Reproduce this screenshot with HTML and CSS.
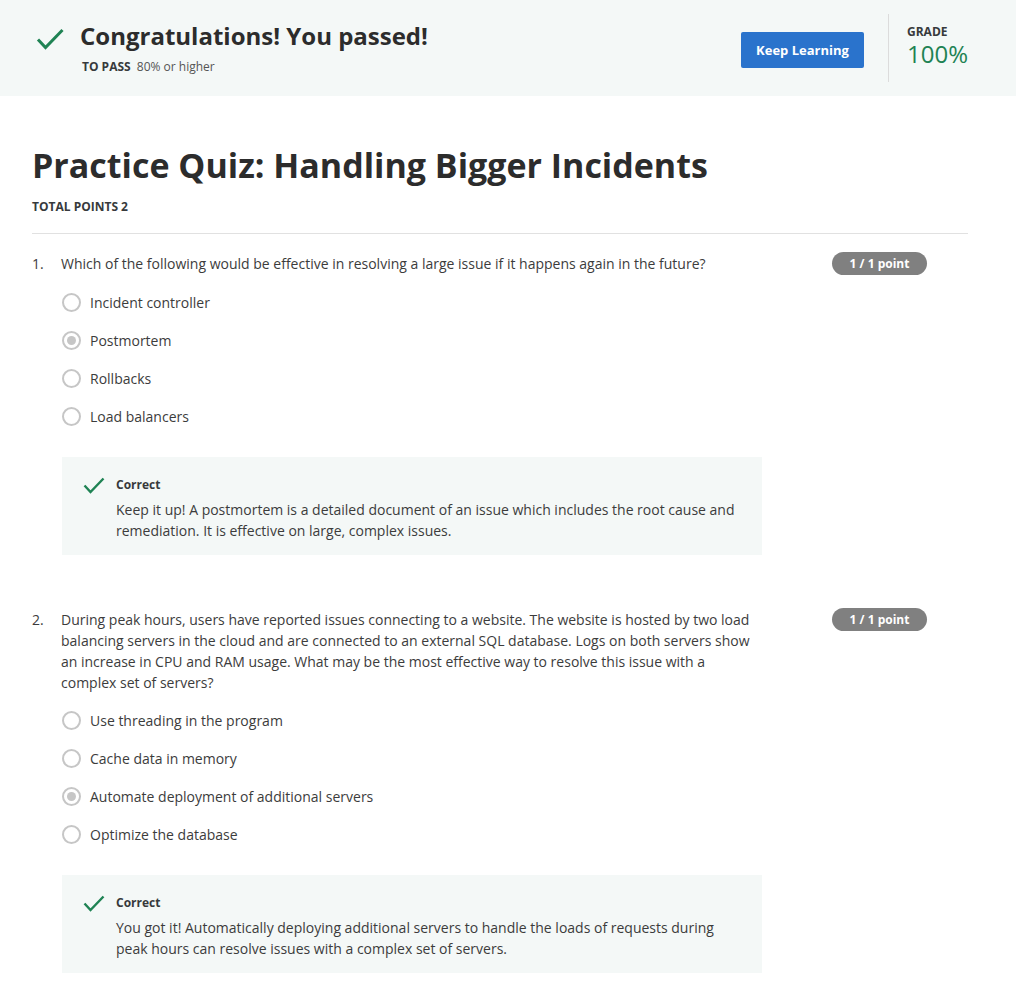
FILE: index.html
```html
<!DOCTYPE html>
<html lang="en">
<head>
<meta charset="utf-8">
<title>Practice Quiz: Handling Bigger Incidents</title>
<link rel="stylesheet" href="styles.css">
</head>
<body>
<header class="banner">
  <div class="banner-inner">
    <svg class="banner-check" width="28" height="22" viewBox="0 0 28 22"><path d="M2 11.5 L9.5 19.5 L26.5 2" fill="none" stroke="#1f8354" stroke-width="3"/></svg>
    <div class="banner-text">
      <h2 class="banner-title">Congratulations! You passed!</h2>
      <div class="banner-sub"><span class="label">TO PASS</span> 80% or higher</div>
    </div>
    <button class="btn-primary">Keep Learning</button>
    <div class="grade">
      <div class="label">GRADE</div>
      <div class="grade-value">100%</div>
    </div>
  </div>
</header>

<main class="content">
  <h1 class="quiz-title">Practice Quiz: Handling Bigger Incidents</h1>
  <div class="total label">TOTAL POINTS 2</div>
  <hr class="rule">

  <section class="question">
    <div class="q-row">
      <span class="q-num">1.</span>
      <p class="q-text">Which of the following would be effective in resolving a large issue if it happens again in the future?</p>
      <span class="badge">1 / 1 point</span>
    </div>
    <ul class="options">
      <li class="option"><span class="radio"></span>Incident controller</li>
      <li class="option"><span class="radio checked"></span>Postmortem</li>
      <li class="option"><span class="radio"></span>Rollbacks</li>
      <li class="option"><span class="radio"></span>Load balancers</li>
    </ul>
    <div class="feedback">
      <svg class="fb-check" width="22" height="17" viewBox="0 0 22 17"><path d="M1.5 8.5 L7.5 15 L20.5 1.5" fill="none" stroke="#1f8354" stroke-width="2.4"/></svg>
      <div class="fb-title">Correct</div>
      <p class="fb-text">Keep it up! A postmortem is a detailed document of an issue which includes the root cause and remediation. It is effective on large, complex issues.</p>
    </div>
  </section>

  <section class="question q2">
    <div class="q-row">
      <span class="q-num">2.</span>
      <p class="q-text">During peak hours, users have reported issues connecting to a website. The website is hosted by two load balancing servers in the cloud and are connected to an external SQL database. Logs on both servers show an increase in CPU and RAM usage. What may be the most effective way to resolve this issue with a complex set of servers?</p>
      <span class="badge">1 / 1 point</span>
    </div>
    <ul class="options">
      <li class="option"><span class="radio"></span>Use threading in the program</li>
      <li class="option"><span class="radio"></span>Cache data in memory</li>
      <li class="option"><span class="radio checked"></span>Automate deployment of additional servers</li>
      <li class="option"><span class="radio"></span>Optimize the database</li>
    </ul>
    <div class="feedback">
      <svg class="fb-check" width="22" height="17" viewBox="0 0 22 17"><path d="M1.5 8.5 L7.5 15 L20.5 1.5" fill="none" stroke="#1f8354" stroke-width="2.4"/></svg>
      <div class="fb-title">Correct</div>
      <p class="fb-text">You got it! Automatically deploying additional servers to handle the loads of requests during peak hours can resolve issues with a complex set of servers.</p>
    </div>
  </section>
</main>
</body>
</html>
```

FILE: styles.css
```css
* { box-sizing: border-box; }
html, body { margin: 0; padding: 0; background: #fff; }
body {
  font-family: "Open Sans", "Liberation Sans", sans-serif;
  color: #3c3c3c;
  font-size: 14px;
  line-height: 21px;
}
.label {
  font-size: 12px;
  font-weight: 700;
  color: #373a3c;
}

/* banner */
.banner {
  background: #f4f8f7;
  height: 96px;
}
.banner-inner {
  display: flex;
  align-items: flex-start;
  width: 968px;
  padding-left: 36px;
  height: 96px;
}
.banner-check {
  margin-top: 28px;
  flex: none;
}
.banner-text {
  margin-left: 16px;
  margin-top: 20px;
  flex: 1;
}
.banner-title {
  margin: 0;
  font-size: 24px;
  line-height: 32px;
  font-weight: 700;
  color: #2c2c2c;
}
.banner-sub {
  margin-top: 7px;
  margin-left: 2px;
  font-size: 12px;
  line-height: 16px;
  color: #555;
}
.banner-sub .label { margin-right: 3px; }
.btn-primary {
  margin-top: 32px;
  width: 123px;
  height: 36px;
  border: none;
  border-radius: 2px;
  background: #2a73cc;
  color: #fff;
  font-family: "Open Sans", "Liberation Sans", sans-serif;
  font-size: 13px;
  font-weight: 700;
  padding: 0;
}
.grade {
  margin-left: 24px;
  margin-top: 14px;
  height: 68px;
  border-left: 1px solid #dcdcdc;
  padding-left: 18px;
  padding-top: 10px;
  width: 80px;
}
.grade .label { line-height: 16px; }
.grade-value {
  font-size: 24px;
  line-height: 28px;
  color: #1f8354;
}

/* content */
.content {
  padding: 0 48px 0 32px;
}
.quiz-title {
  margin: 0;
  padding-top: 46px;
  font-size: 34px;
  line-height: 46px;
  font-weight: 700;
  color: #2c2c2c;
}
.total {
  margin-top: 11px;
  line-height: 16px;
}
.rule {
  border: none;
  border-top: 1px solid #e1e1e1;
  margin: 18px 0 0;
}

.question { padding-top: 19px; }
.question.q2 { padding-top: 54px; }
.q-row {
  display: flex;
  align-items: flex-start;
  padding-right: 41px;
}
.q-num {
  width: 29px;
  flex: none;
}
.q-text {
  margin: 0;
  flex: 1;
  padding-right: 74px;
}
.badge {
  flex: none;
  width: 95px;
  height: 23px;
  margin-top: -1px;
  border-radius: 12px;
  background: #808080;
  color: #fff;
  font-size: 12px;
  font-weight: 700;
  line-height: 23px;
  text-align: center;
}

.options {
  list-style: none;
  margin: 8px 0 0;
  padding: 0 0 0 29px;
}
.option {
  display: flex;
  align-items: center;
  height: 38px;
}
.radio {
  width: 19px;
  height: 19px;
  border: 2px solid #c6c6c6;
  border-radius: 50%;
  margin-left: 1px;
  margin-right: 9px;
  flex: none;
  display: flex;
  align-items: center;
  justify-content: center;
}
.radio.checked::after {
  content: "";
  width: 9px;
  height: 9px;
  border-radius: 50%;
  background: #c6c6c6;
}

.feedback {
  position: relative;
  margin: 22px 0 0 30px;
  width: 700px;
  background: #f4f8f7;
  padding: 20px 24px 14px 54px;
}
.fb-check {
  position: absolute;
  left: 21px;
  top: 20px;
}
.fb-title {
  font-size: 12px;
  line-height: 16px;
  font-weight: 700;
  color: #373a3c;
}
.fb-text {
  margin: 6px 0 0;
}
```
